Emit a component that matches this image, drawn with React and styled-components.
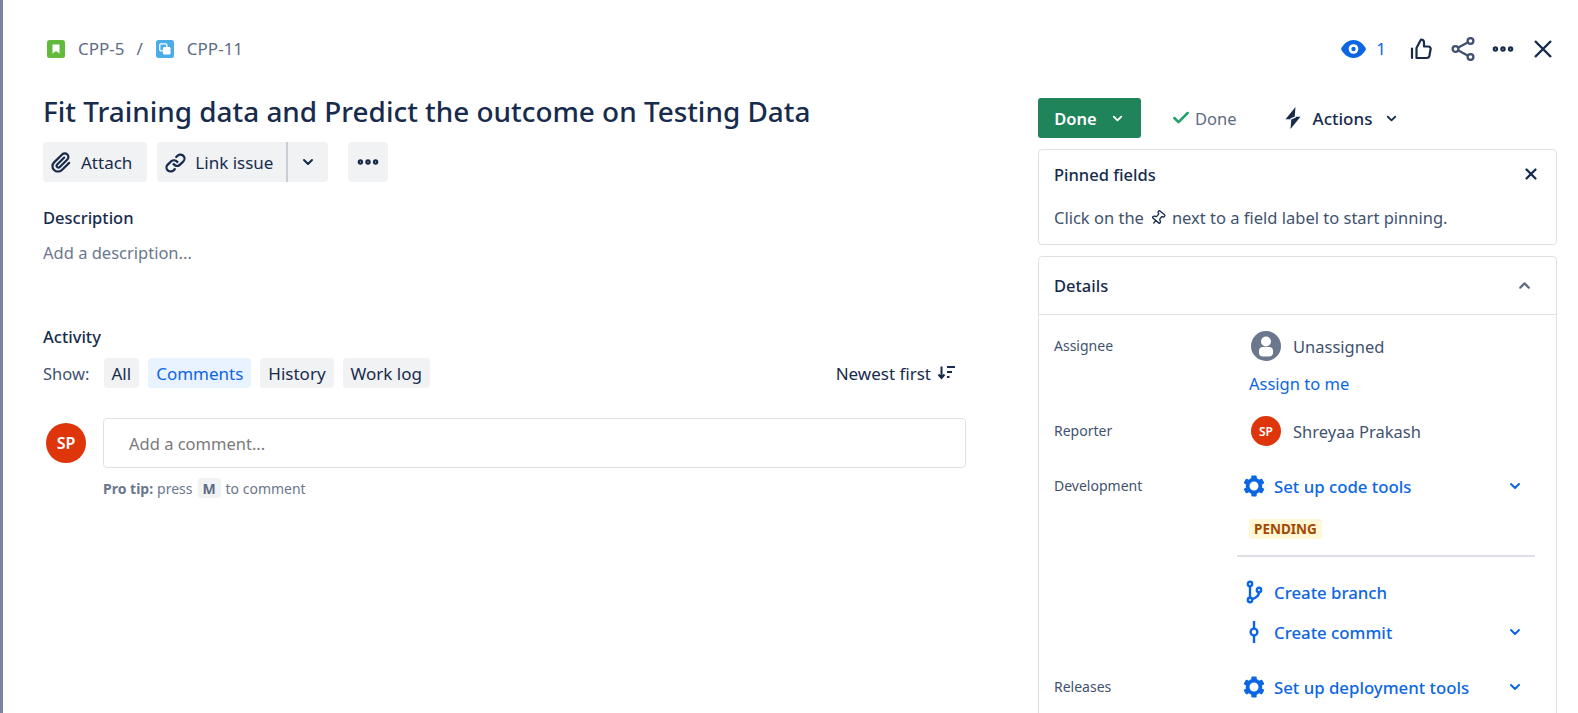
import React from "react";
import styled, { createGlobalStyle } from "styled-components";
import { ChevronDown, ChevronUp, Check, Pin, Ellipsis, X } from "lucide-react";

const Global = createGlobalStyle`
  html, body { margin: 0; padding: 0; background: #fff; }
  body { font-family: "Noto Sans", "Open Sans", Arial, sans-serif; color: #172b4d; }
  * { box-sizing: border-box; }
`;

const Page = styled.div`display: flex; height: 713px; overflow: hidden; background: #fff;`;
const Strip = styled.div`width: 3px; flex: none; background: #7a869a;`;
const Main = styled.div`flex: 1; min-width: 0; padding-top: 38px;`;

const Header = styled.header`display: flex; justify-content: space-between; align-items: center; height: 21px; padding: 0 25px 0 44px;`;
const Crumbs = styled.nav`display: flex; align-items: center; font-size: 17px; color: #5e6c84;`;
const CrumbText = styled.span`margin-left: 13px;`;
const CrumbSlash = styled.span`margin: 0 13px 0 12px;`;
const TopActions = styled.div`display: flex; align-items: center;`;
const WatchCount = styled.span`font-size: 17px; color: #0c66e4; margin: 0 24px 0 10px;`;
const TopIcon = styled.span`display: flex; margin-left: ${p => p.$gap || 0}px; color: ${p => p.$color || "#172b4d"};`;

const Body = styled.div`display: flex; margin-top: 35px; padding-left: 40px;`;
const Left = styled.section`width: 923px; flex: none;`;
const Right = styled.aside`width: 519px; flex: none; margin-left: 72px; padding-top: 4px;`;

const Title = styled.h1`margin: -1px 0 0; font-size: 27.9px; line-height: 36px; font-weight: 500; color: #172b4d;`;
const ActionRow = styled.div`display: flex; margin-top: 13px;`;
const GreyButton = styled.button`
  display: flex; align-items: center; gap: 6px; height: 40px; padding: 0 ${p => p.$pad ?? 15}px 0 ${p => p.$padL ?? 5}px;
  margin-left: ${p => p.$gap || 0}px; border: 0; background: #f1f2f4; border-radius: ${p => p.$radius || "4px"};
  font: inherit; font-size: 17px; color: #172b4d;
`;
const SplitDivider = styled.span`width: 2px; height: 40px; background: #c9ced6;`;

const SectionHead = styled.h2`margin: ${p => p.$top}px 0 0; font-size: 16.5px; line-height: 24px; font-weight: 500; color: #172b4d;`;
const Placeholder = styled.div`margin-top: 11px; font-size: 16.5px; line-height: 24px; color: #6b778c;`;

const ShowRow = styled.div`display: flex; align-items: center; margin-top: 9px; padding-right: 11px;`;
const ShowLabel = styled.span`width: 60.5px; font-size: 16.5px; color: #42526e;`;
const Filter = styled.button`
  height: 30px; padding: 0 8px; margin-right: 9px; border: 0; border-radius: 4px; font: inherit; font-size: 17px;
  background: ${p => p.$active ? "#e9f2ff" : "#f1f2f4"}; color: ${p => p.$active ? "#0c66e4" : "#172b4d"};
`;
const Sort = styled.div`margin-left: auto; display: flex; align-items: center; gap: 6px; font-size: 17px; color: #172b4d;`;

const CommentRow = styled.div`display: flex; margin-top: 30px;`;
const Avatar = styled.div`
  width: ${p => p.$size}px; height: ${p => p.$size}px; flex: none; border-radius: 50%; background: #de350b; color: #fff;
  display: flex; align-items: center; justify-content: center; font-weight: 600; font-size: ${p => p.$font}px;
`;
const AvatarSlot = styled.div`width: 60px; padding: 5px 0 0 3px; flex: none;`;
const CommentBox = styled.div`
  flex: 1; height: 50px; border: 1px solid #dfe1e6; border-radius: 4px; padding-left: 25px;
  display: flex; align-items: center; font-size: 16.5px; color: #7a7a7a;
`;
const ProTip = styled.p`display: flex; align-items: center; margin: 10px 0 0 60px; height: 20px; font-size: 14px; color: #6b778c;`;
const Kbd = styled.kbd`
  display: inline-flex; align-items: center; justify-content: center; width: 23px; height: 20px; margin: 0 5px; border-radius: 3px;
  background: #f1f2f4; font: inherit; font-weight: 700; color: #5e6c84;
`;
const Strong = styled.strong`font-weight: 700; margin-right: 4px;`;

const StatusRow = styled.div`display: flex; align-items: center; height: 40px;`;
const DoneButton = styled.button`
  display: flex; align-items: center; justify-content: center; gap: 13px; width: 103px; height: 40px; border: 0; border-radius: 3px;
  background: #1f845a; color: #fff; font: inherit; font-size: 16.5px; font-weight: 600;
`;
const Resolution = styled.div`display: flex; align-items: center; gap: 4px; margin-left: 30px; font-size: 16.5px; color: #5e6c84;`;
const ActionsMenu = styled.div`display: flex; align-items: center; margin-left: 47px; font-size: 17px; font-weight: 500; color: #172b4d;`;
const ActionsText = styled.span`margin: 0 12px 0 11px;`;

const Card = styled.div`border: 1px solid #dfe1e6; border-radius: 4px; margin-top: 11px; padding: ${p => p.$pad || 0};`;
const PinnedHead = styled.div`display: flex; align-items: center; justify-content: space-between; height: 24px; padding-right: 1px; font-size: 16.5px; font-weight: 500;`;
const PinnedHint = styled.p`margin: 20px 0 0; display: flex; align-items: center; gap: 6px; font-size: 16.5px; line-height: 24px; color: #42526e;`;
const DetailsHead = styled.div`display: flex; align-items: center; justify-content: space-between; height: 58px; padding: 0 23px 0 15px; border-bottom: 1px solid #dfe1e6; font-size: 16.5px; font-weight: 500;`;
const DetailsBody = styled.div`padding: 0 21px 40px 15px;`;
const Row = styled.div`display: grid; grid-template-columns: 196px 1fr; margin-top: ${p => p.$top}px;`;
const Label = styled.div`height: 30px; line-height: 30px; font-size: 14px; color: #42526e;`;
const UserLine = styled.div`display: flex; align-items: center; gap: 12px; height: 30px; padding-left: 1px; font-size: 16.5px; color: #42526e;`;
const AssignLink = styled.a`display: block; margin: 11px 0 0 -1px; font-size: 16.5px; line-height: 24px; color: #0c66e4;`;
const LinkRow = styled.div`
  display: flex; align-items: center; gap: 9px; height: 30px; margin: ${p => p.$top || 0}px 0 0 -7px; padding-right: 12px;
  color: #0c66e4; font-size: 16.8px; font-weight: 500;
`;
const LinkIconSlot = styled.span`display: flex; justify-content: center; width: 22px;`;
const LinkChevron = styled.span`display: flex; margin-left: auto;`;
const Lozenge = styled.span`
  display: inline-flex; align-items: center; height: 20px; margin: 18px 0 0 -1px; padding: 0 5px; border-radius: 3px;
  background: #fff7d6; color: #a54800; font-size: 13.5px; font-weight: 700;
`;
const ValueDivider = styled.div`height: 2px; margin: 16px 0 0 -13px; background: #dcdfe4;`;

const Gear = () => (
  <svg width="22" height="22" viewBox="0 0 22 22" aria-hidden="true">
    <circle cx="11" cy="11" r="6.4" fill="none" stroke="#0c66e4" strokeWidth="3.8" />
    <g fill="#0c66e4">
      {[0, 60, 120, 180, 240, 300].map(a => (
        <rect key={a} x="8.3" y="0.4" width="5.4" height="4" rx="1" transform={`rotate(${a} 11 11)`} />
      ))}
    </g>
  </svg>
);
const Eye = () => (
  <svg width="25" height="18" viewBox="0 0 25 18" aria-hidden="true">
    <path d="M12.500 0C6.500 0 2 4.500 0 9c2 4.500 6.500 9 12.500 9S23 13.500 25 9C23 4.500 18.500 0 12.500 0z" fill="#0c66e4" />
    <circle cx="12.500" cy="9" r="4.800" fill="#fff" />
    <circle cx="12.500" cy="9" r="2.200" fill="#0c66e4" />
  </svg>
);
const Thumb = () => (
  <svg width="22" height="22" viewBox="0 0 22 22" fill="none" stroke="#172b4d" strokeWidth="2.200" strokeLinejoin="round" strokeLinecap="round" aria-hidden="true">
    <path d="M2 10.500v9.500" />
    <path d="M6.500 20V10l4.500-8.500c2 0 3 1.300 3 3V8.500h4.300c1.600 0 2.600 1.300 2.300 2.800l-1.200 6.500c-.3 1.300-1.100 2.200-2.500 2.200z" />
  </svg>
);
const Share = () => (
  <svg width="24" height="24" viewBox="0 0 24 24" fill="none" stroke="#42526e" strokeWidth="2.300" aria-hidden="true">
    <circle cx="4.500" cy="12" r="2.900" />
    <circle cx="19.500" cy="4" r="2.900" />
    <circle cx="19.500" cy="20" r="2.900" />
    <path d="M7 10.700l10-5.400M7 13.300l10 5.400" />
  </svg>
);
const CloseLarge = () => (
  <svg width="20" height="20" viewBox="0 0 20 20" fill="none" stroke="#172b4d" strokeWidth="2.400" aria-hidden="true">
    <path d="M2 2l16 16M18 2L2 18" />
  </svg>
);
const Bolt = () => (
  <svg width="18" height="24" viewBox="0 0 18 24" aria-hidden="true">
    <path d="M11.500 1 1.500 13.200h5.800L6.500 23l10-12.200h-5.800z" fill="#172b4d" />
    <path d="M6.500 13.200l5.200-2.400" fill="none" stroke="#fff" strokeWidth="1.300" />
  </svg>
);
const Attachment = () => (
  <svg width="27" height="27" viewBox="0 0 24 24" fill="#172b4d" aria-hidden="true">
    <path d="M11.643 17.965c-1.53 1.495-4.016 1.496-5.542.004a3.773 3.773 0 01.002-5.412l7.147-6.985a2.316 2.316 0 013.233-.003c.893.873.895 2.282.004 3.153l-6.703 6.55a.653.653 0 01-.914-.008.62.62 0 010-.902l6.229-6.087a.941.941 0 000-1.36.995.995 0 00-1.39 0l-6.23 6.087a2.502 2.502 0 000 3.577 2.643 2.643 0 003.698.007l6.703-6.55a4.074 4.074 0 00-.004-5.82 4.306 4.306 0 00-6.013.003l-7.147 6.985a5.655 5.655 0 00-.002 8.092c2.307 2.256 6.051 2.254 8.35-.003l6.425-6.279a.941.941 0 000-1.36.995.995 0 00-1.39 0l-6.456 6.311z" />
  </svg>
);
const ChainLink = () => (
  <svg width="27" height="27" viewBox="0 0 24 24" fill="#172b4d" aria-hidden="true">
    <path d="M12.856 5.457l-.937.92a1.002 1.002 0 000 1.437 1.047 1.047 0 001.463 0l.984-.966c.967-.95 2.542-1.135 3.602-.288a2.54 2.54 0 01.203 3.81l-2.903 2.852a2.646 2.646 0 01-3.696 0l-1.11-1.09L9 13.57l1.108 1.089c1.822 1.788 4.802 1.788 6.622 0l2.905-2.852a4.558 4.558 0 00-.357-6.82c-1.893-1.517-4.695-1.226-6.422.47" />
    <path d="M11.144 19.543l.937-.92a1.002 1.002 0 000-1.437 1.047 1.047 0 00-1.462 0l-.985.966c-.967.95-2.542 1.135-3.602.288a2.54 2.54 0 01-.203-3.81l2.903-2.852a2.646 2.646 0 013.696 0l1.11 1.09L15 11.43l-1.108-1.089c-1.822-1.788-4.802-1.788-6.622 0l-2.905 2.852a4.558 4.558 0 00.357 6.82c1.893 1.517 4.695 1.226 6.422-.47" />
  </svg>
);
const Story = () => (
  <svg width="18" height="18" viewBox="0 0 18 18" aria-hidden="true">
    <rect width="18" height="18" rx="2.500" fill="#63ba3c" />
    <path d="M5.500 4.500h7v9L9 11l-3.500 2.500z" fill="#fff" />
  </svg>
);
const Subtask = () => (
  <svg width="18" height="18" viewBox="0 0 18 18" aria-hidden="true">
    <rect width="18" height="18" rx="2.500" fill="#4bade8" />
    <rect x="3.800" y="3.800" width="7" height="7" rx="1" fill="none" stroke="#fff" strokeWidth="1.300" />
    <rect x="7" y="7" width="7.500" height="7.500" rx="1.200" fill="#fff" />
  </svg>
);
const Unassigned = () => (
  <svg width="30" height="30" viewBox="0 0 30 30" aria-hidden="true">
    <circle cx="15" cy="15" r="15" fill="#6b778c" />
    <circle cx="15" cy="10.500" r="5" fill="#fff" />
    <rect x="8" y="16" width="14" height="9.500" rx="4" fill="#fff" />
  </svg>
);
const Branch = () => (
  <svg width="20" height="24" viewBox="0 0 20 24" fill="none" stroke="#0c66e4" strokeWidth="2.400" aria-hidden="true">
    <circle cx="6" cy="4" r="2.200" />
    <circle cx="6" cy="20" r="2.200" />
    <circle cx="15" cy="10" r="2.200" />
    <path d="M6 6.200v11.600M15 12.200c0 4-4 6-6.800 7" />
  </svg>
);
const Commit = () => (
  <svg width="20" height="24" viewBox="0 0 20 24" fill="none" stroke="#0c66e4" strokeWidth="2.400" aria-hidden="true">
    <circle cx="10" cy="12" r="3.400" />
    <path d="M10 1v7.600M10 15.400V23" />
  </svg>
);
const SortIcon = () => (
  <svg width="18" height="16" viewBox="0 0 18 16" fill="none" stroke="#172b4d" strokeWidth="2" aria-hidden="true">
    <path d="M4.500 1.500v11M1.500 9.500l3 3.500 3-3.500M10 2h8M10 7h5M10 12h2.500" />
  </svg>
);

export default function App() {
  return (
    <Page>
      <Global />
      <Strip />
      <Main>
        <Header>
          <Crumbs>
            <Story />
            <CrumbText>CPP-5</CrumbText>
            <CrumbSlash>/</CrumbSlash>
            <Subtask />
            <CrumbText>CPP-11</CrumbText>
          </Crumbs>
          <TopActions>
            <Eye />
            <WatchCount>1</WatchCount>
            <TopIcon><Thumb /></TopIcon>
            <TopIcon $gap={19}><Share /></TopIcon>
            <TopIcon $gap={15}><Ellipsis size={26} strokeWidth={3} /></TopIcon>
            <TopIcon $gap={17}><CloseLarge /></TopIcon>
          </TopActions>
        </Header>
        <Body>
          <Left>
            <Title>Fit Training data and Predict the outcome on Testing Data</Title>
            <ActionRow>
              <GreyButton><Attachment />Attach</GreyButton>
              <GreyButton $gap={10} $pad={13} $radius="4px 0 0 4px"><ChainLink />Link issue</GreyButton>
              <SplitDivider />
              <GreyButton $pad={12} $padL={12} $radius="0 4px 4px 0"><ChevronDown size={16} strokeWidth={3} /></GreyButton>
              <GreyButton $gap={20} $pad={7} $padL={7} aria-label="More"><Ellipsis size={26} strokeWidth={3} /></GreyButton>
            </ActionRow>
            <SectionHead $top={24}>Description</SectionHead>
            <Placeholder>Add a description...</Placeholder>
            <SectionHead $top={60}>Activity</SectionHead>
            <ShowRow>
              <ShowLabel>Show:</ShowLabel>
              <Filter>All</Filter>
              <Filter $active>Comments</Filter>
              <Filter>History</Filter>
              <Filter>Work log</Filter>
              <Sort>Newest first <SortIcon /></Sort>
            </ShowRow>
            <CommentRow>
              <AvatarSlot><Avatar $size={40} $font={16}>SP</Avatar></AvatarSlot>
              <CommentBox>Add a comment...</CommentBox>
            </CommentRow>
            <ProTip><Strong>Pro tip:</Strong> press <Kbd>M</Kbd> to comment</ProTip>
          </Left>
          <Right>
            <StatusRow>
              <DoneButton>Done <ChevronDown size={15} strokeWidth={3} /></DoneButton>
              <Resolution><Check size={20} color="#22a06b" strokeWidth={3} />Done</Resolution>
              <ActionsMenu><Bolt /><ActionsText>Actions</ActionsText><ChevronDown size={15} strokeWidth={3} /></ActionsMenu>
            </StatusRow>
            <Card $pad="12px 15px 14px 15px">
              <PinnedHead>Pinned fields <X size={18} strokeWidth={3} /></PinnedHead>
              <PinnedHint>Click on the <Pin size={16} strokeWidth={2} color="#172b4d" style={{ transform: "rotate(40deg)" }} /> next to a field label to start pinning.</PinnedHint>
            </Card>
            <Card>
              <DetailsHead>Details <ChevronUp size={17} strokeWidth={3} color="#5e6c84" /></DetailsHead>
              <DetailsBody>
                <Row $top={16}>
                  <Label>Assignee</Label>
                  <div>
                    <UserLine><Unassigned />Unassigned</UserLine>
                    <AssignLink>Assign to me</AssignLink>
                  </div>
                </Row>
                <Row $top={20}>
                  <Label>Reporter</Label>
                  <UserLine><Avatar $size={30} $font={12}>SP</Avatar>Shreyaa Prakash</UserLine>
                </Row>
                <Row $top={25}>
                  <Label>Development</Label>
                  <div>
                    <LinkRow><LinkIconSlot><Gear /></LinkIconSlot>Set up code tools<LinkChevron><ChevronDown size={16} strokeWidth={3} /></LinkChevron></LinkRow>
                    <Lozenge>PENDING</Lozenge>
                    <ValueDivider />
                    <LinkRow $top={20}><LinkIconSlot><Branch /></LinkIconSlot>Create branch</LinkRow>
                    <LinkRow $top={10}><LinkIconSlot><Commit /></LinkIconSlot>Create commit<LinkChevron><ChevronDown size={16} strokeWidth={3} /></LinkChevron></LinkRow>
                  </div>
                </Row>
                <Row $top={25}>
                  <Label>Releases</Label>
                  <LinkRow><LinkIconSlot><Gear /></LinkIconSlot>Set up deployment tools<LinkChevron><ChevronDown size={16} strokeWidth={3} /></LinkChevron></LinkRow>
                </Row>
              </DetailsBody>
            </Card>
          </Right>
        </Body>
      </Main>
    </Page>
  );
}
